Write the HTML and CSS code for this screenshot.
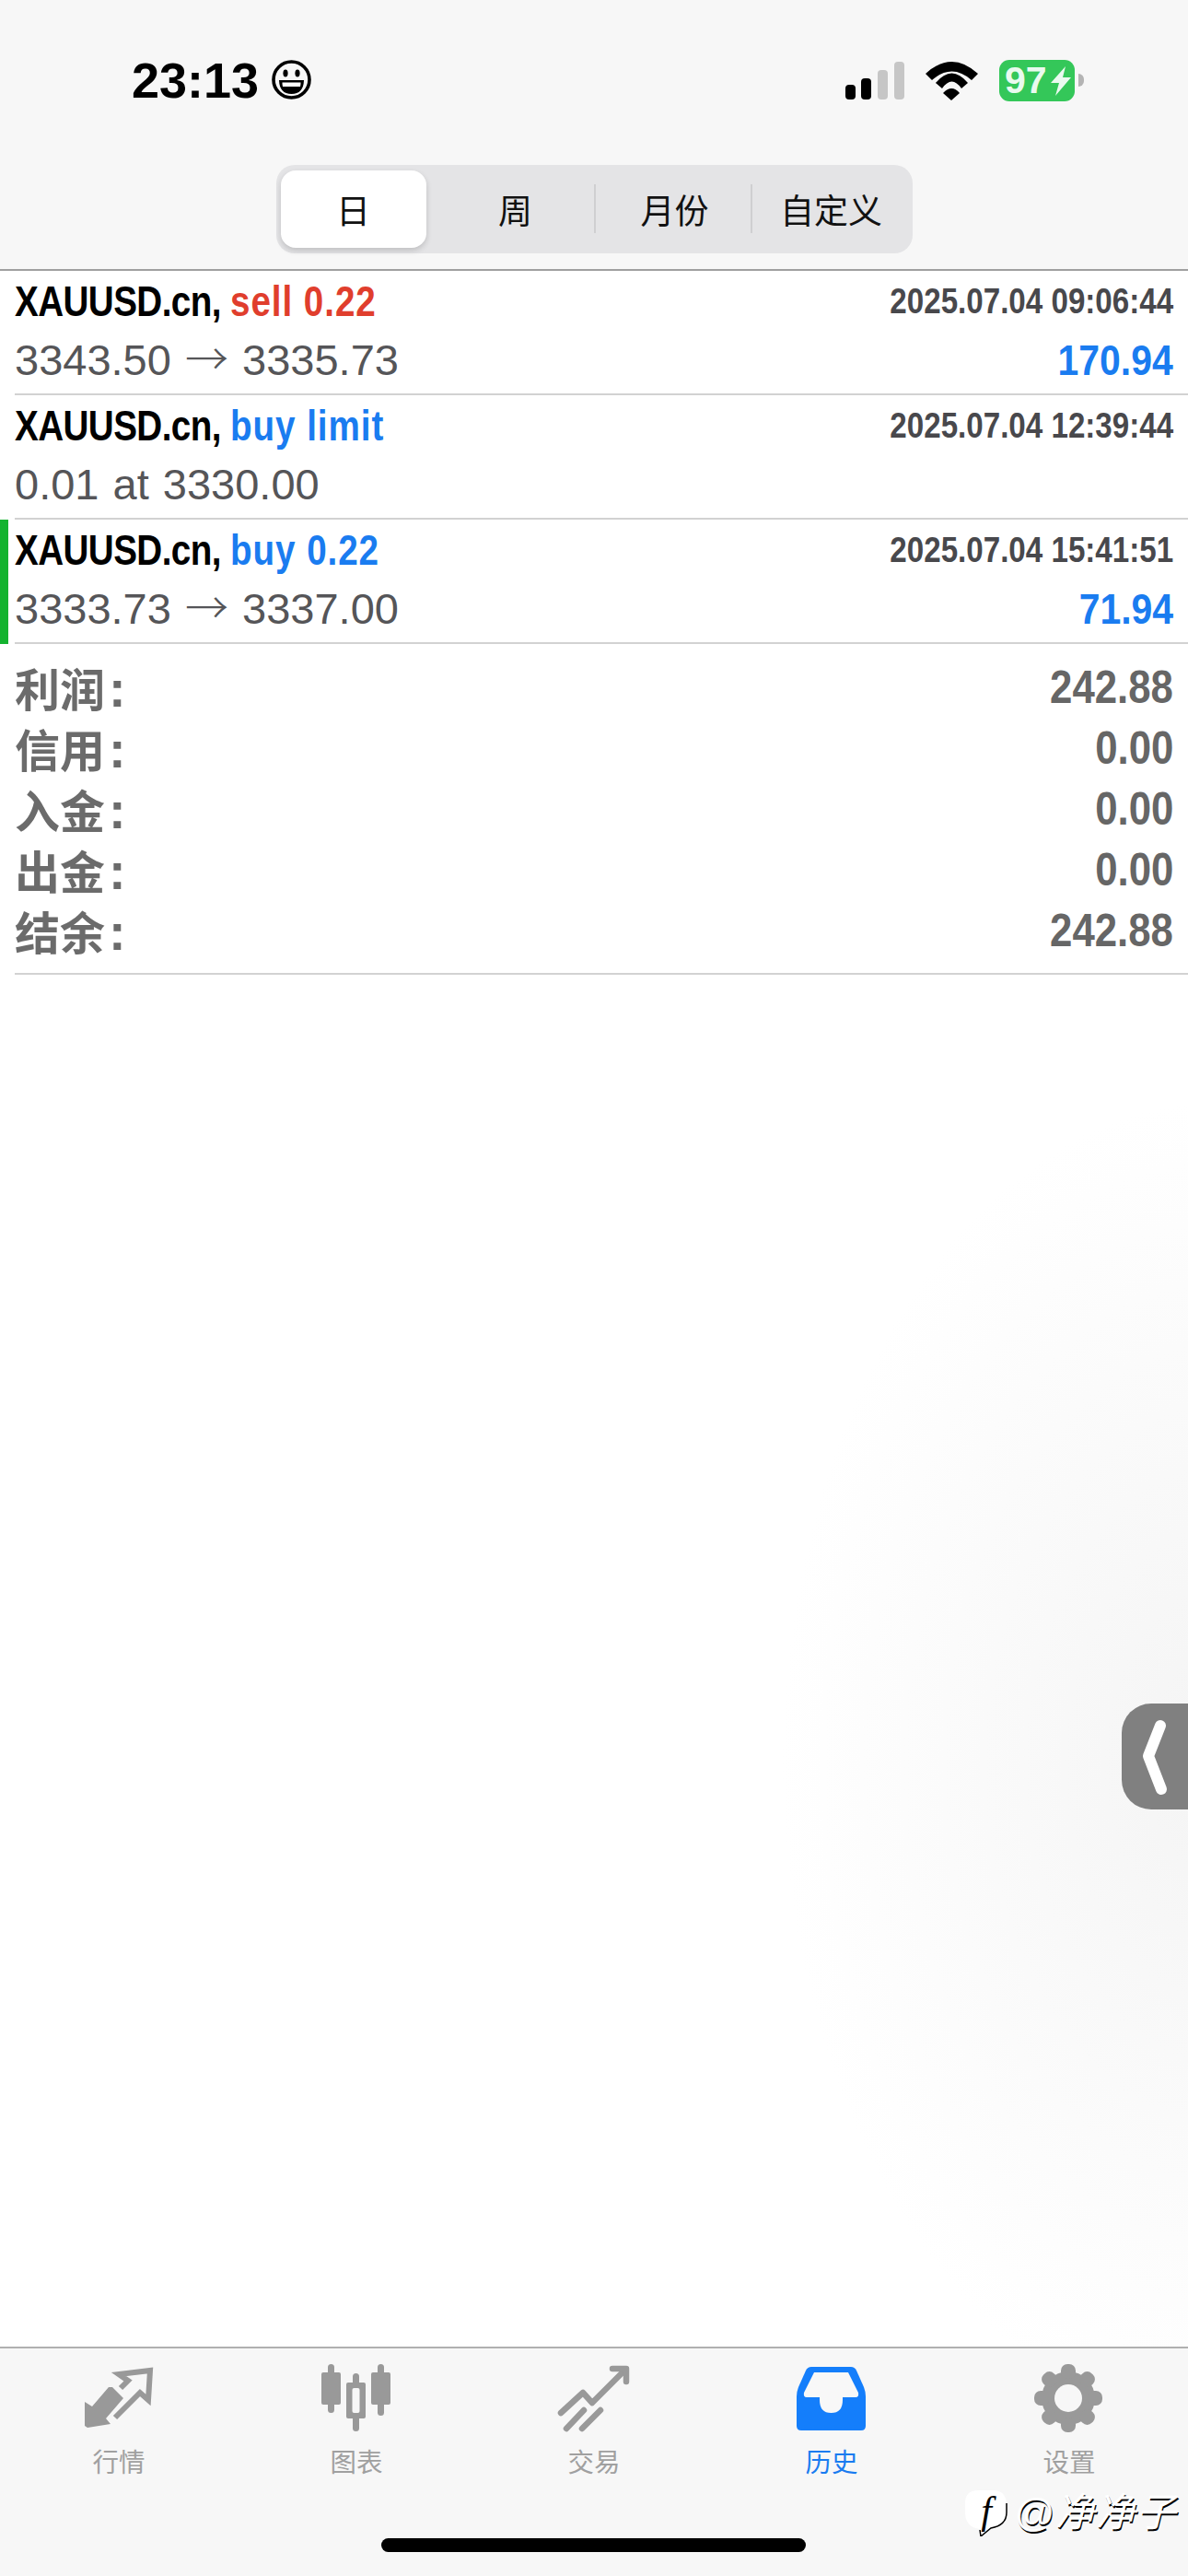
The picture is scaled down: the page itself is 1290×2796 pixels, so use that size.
FILE: index.html
```html
<!DOCTYPE html>
<html>
    <head>
        <meta charset="utf-8">
        <title>History</title>
        <link rel="stylesheet" href="styles.css">
    </head>
    <body>
        <div class="page">
            <header class="header">
                <div class="status">
                    <div class="clock">
                        <span class="time">23:13</span>
                        <svg class="smiley" width="43" height="43" viewBox="0 0 43 43">
                            <circle cx="21.5" cy="21.5" r="19.5" fill="none" stroke="#000" stroke-width="3.6"/>
                            <ellipse cx="15" cy="14.5" rx="2.6" ry="4" fill="#000"/>
                            <ellipse cx="28" cy="14.5" rx="2.6" ry="4" fill="#000"/>
                            <path d="M8 22H35Q34.500 37 21.500 37Q8.500 37 8 22Z" fill="#000"/>
                            <path d="M11.500 24.500H31.500Q31.500 27 31 29H12Q11.500 27 11.500 24.500Z" fill="#fff"/>
                        </svg>
                    </div>
                    <div class="indicators">
                        <svg width="64" height="41" viewBox="0 0 64 41">
                            <rect x="0" y="25" width="11" height="16" rx="4" fill="#000"/>
                            <rect x="17" y="18" width="11" height="23" rx="4" fill="#000"/>
                            <rect x="35" y="9" width="11" height="32" rx="4" fill="#c6c6c6"/>
                            <rect x="53" y="0" width="11" height="41" rx="4" fill="#c6c6c6"/>
                        </svg>
                        <svg width="57" height="42" viewBox="0 0 57 42">
                            <path d="M0 13Q28.500 -13 57 13L50 20Q28.500 1 7 20Z" fill="#000"/>
                            <path d="M11 23Q28.500 2 46 23L39 29Q28.500 14 18 29Z" fill="#000"/>
                            <path d="M19 34Q28.500 24 37 34L28 42Z" fill="#000"/>
                        </svg>
                        <div class="battery">
                            <span class="battery-text">97</span>
                            <svg width="24" height="34" viewBox="0 0 24 34">
                                <polygon points="17,1 1,19 10,19 6,33 23,13 14,13" fill="#eafaef"/>
                            </svg>
                        </div>
                    </div>
                </div>
                <div class="segments">
                    <div class="segment segment-on">日</div>
                    <div class="segment">周</div>
                    <div class="segment segment-line">月份</div>
                    <div class="segment segment-line">自定义</div>
                </div>
            </header>

            <main class="main">
                <div class="row">
                    <div class="mark"></div>
                    <div class="row-body">
                        <div class="title"><span class="squeeze squeeze-left"><span class="name">XAUUSD.cn, </span><span class="side red">sell 0.22</span></span></div>
                        <div class="date"><span class="squeeze squeeze-right">2025.07.04 09:06:44</span></div>
                        <div class="price">3343.50 <span class="arrow">→</span> 3335.73</div>
                        <div class="profit"><span class="squeeze squeeze-right">170.94</span></div>
                    </div>
                </div>
                <div class="row">
                    <div class="mark"></div>
                    <div class="row-body">
                        <div class="title"><span class="squeeze squeeze-left"><span class="name">XAUUSD.cn, </span><span class="side blue">buy limit</span></span></div>
                        <div class="date"><span class="squeeze squeeze-right">2025.07.04 12:39:44</span></div>
                        <div class="price">0.01 at 3330.00</div>
                        <div class="profit"></div>
                    </div>
                </div>
                <div class="row">
                    <div class="mark mark-on"></div>
                    <div class="row-body">
                        <div class="title"><span class="squeeze squeeze-left"><span class="name">XAUUSD.cn, </span><span class="side blue">buy 0.22</span></span></div>
                        <div class="date"><span class="squeeze squeeze-right">2025.07.04 15:41:51</span></div>
                        <div class="price">3333.73 <span class="arrow">→</span> 3337.00</div>
                        <div class="profit"><span class="squeeze squeeze-right">71.94</span></div>
                    </div>
                </div>

                <div class="summary">
                    <div class="sum-row"><span class="sum-label">利润<b>:</b></span><span class="sum-value">242.88</span></div>
                    <div class="sum-row"><span class="sum-label">信用<b>:</b></span><span class="sum-value">0.00</span></div>
                    <div class="sum-row"><span class="sum-label">入金<b>:</b></span><span class="sum-value">0.00</span></div>
                    <div class="sum-row"><span class="sum-label">出金<b>:</b></span><span class="sum-value">0.00</span></div>
                    <div class="sum-row"><span class="sum-label">结余<b>:</b></span><span class="sum-value">242.88</span></div>
                </div>

                <div class="handle">
                    <svg width="72" height="115" viewBox="0 0 72 115">
                        <path d="M42 24L29 57L43 93" fill="none" stroke="#fff" stroke-width="12" stroke-linecap="round" stroke-linejoin="round"/>
                    </svg>
                </div>
            </main>

            <footer class="tabbar">
                <nav class="tabs">
                    <div class="tab">
                        <svg width="80" height="76" viewBox="0 0 80 76">
                            <path d="M3 42L11 47L29 26H33L45 38L26 60L31 66L6 70L3 68Z" fill="#999"/>
                            <path d="M42 27L50 19L40 12L74 8L72 40L63 32L36 59" fill="none" stroke="#999" stroke-width="6"/>
                        </svg>
                        <span class="tab-label">行情</span>
                    </div>
                    <div class="tab">
                        <svg width="80" height="76" viewBox="0 0 80 76">
                            <rect x="9" y="1" width="7" height="53" rx="3.500" fill="#999"/>
                            <rect x="2" y="10" width="21" height="35" rx="2" fill="#999"/>
                            <rect x="36" y="11" width="7" height="63" rx="3.500" fill="#999"/>
                            <rect x="29" y="21" width="21" height="39" rx="2" fill="#999"/>
                            <rect x="35.500" y="27" width="8" height="27" rx="2" fill="#f7f7f7"/>
                            <rect x="63" y="1" width="7" height="56" rx="3.500" fill="#999"/>
                            <rect x="56" y="10" width="21" height="35" rx="2" fill="#999"/>
                        </svg>
                        <span class="tab-label">图表</span>
                    </div>
                    <div class="tab">
                        <svg width="80" height="76" viewBox="0 0 80 76">
                            <path d="M4 54L28 32L38 43L74 7" fill="none" stroke="#999" stroke-width="6.500" stroke-linecap="round" stroke-linejoin="round"/>
                            <path d="M60 6H75V20" fill="none" stroke="#999" stroke-width="6.500" stroke-linecap="round" stroke-linejoin="round"/>
                            <path d="M10 71L29 51M27 71L47 51" fill="none" stroke="#999" stroke-width="6.500" stroke-linecap="round"/>
                        </svg>
                        <span class="tab-label">交易</span>
                    </div>
                    <div class="tab tab-on">
                        <svg width="80" height="76" viewBox="0 0 80 76">
                            <path d="M18 4H61Q65 4 67 8L75 26Q77 31 77 36V68Q77 73 72 73H7Q2 73 2 68V36Q2 31 4 26L12 8Q14 4 18 4Z" fill="#147efb"/>
                            <path d="M21 10H58L69 32Q70 37 66 37H52V40Q52 54 39.500 54Q27 54 27 40V37H13Q9 37 10 32Z" fill="#f8f8f8"/>
                        </svg>
                        <span class="tab-label">历史</span>
                    </div>
                    <div class="tab">
                        <svg width="80" height="76" viewBox="0 0 80 76">
                            <g transform="translate(39 38)" fill="#999">
                                <circle r="29"/>
                                <rect x="-8" y="-37" width="16" height="16" rx="7"/>
                                <rect x="-8" y="-37" width="16" height="16" rx="7" transform="rotate(45)"/>
                                <rect x="-8" y="-37" width="16" height="16" rx="7" transform="rotate(90)"/>
                                <rect x="-8" y="-37" width="16" height="16" rx="7" transform="rotate(135)"/>
                                <rect x="-8" y="-37" width="16" height="16" rx="7" transform="rotate(180)"/>
                                <rect x="-8" y="-37" width="16" height="16" rx="7" transform="rotate(225)"/>
                                <rect x="-8" y="-37" width="16" height="16" rx="7" transform="rotate(270)"/>
                                <rect x="-8" y="-37" width="16" height="16" rx="7" transform="rotate(315)"/>
                                <circle r="15" fill="#f7f7f7"/>
                            </g>
                        </svg>
                        <span class="tab-label">设置</span>
                    </div>
                </nav>
                <div class="home-bar"></div>
                <div class="watermark">
                    <div class="logo">
                        <svg class="logo-shape" width="46" height="50" viewBox="0 0 46 50">
                            <path d="M14 0H30Q45 0 45 16V24Q45 38 28 41L17 50L16 42Q0 40 0 24V14Q0 0 14 0Z" fill="#fff"/>
                            <path d="M45 14V24Q45 38 28 41L17 50L16 43" fill="none" stroke="#000" stroke-width="1.500"/>
                        </svg>
                        <span class="logo-letter">f</span>
                    </div>
                    <span class="watermark-text">@净净子</span>
                </div>
            </footer>
        </div>
    </body>
</html>
```

FILE: styles.css
```css
*{
    box-sizing: border-box;
    margin: 0;
}
body{
    font-family: "Liberation Sans", "Noto Sans CJK SC", sans-serif;
    background: #fff;
}
.page{
    width: 1290px;
    height: 2796px;
    display: flex;
    flex-direction: column;
    overflow: hidden;
}

/* status bar and period switch */
.header{
    height: 294px;
    padding-top: 60px;
    background: #f7f7f7;
    border-bottom: 2px solid #a0a0a0;
}
.status{
    height: 55px;
    padding: 0 113px 0 143px;
    display: flex;
    justify-content: space-between;
    align-items: center;
}
.clock{
    display: flex;
    align-items: center;
    gap: 14px;
}
.time{
    font-size: 54px;
    font-weight: bold;
    color: #000;
    line-height: 55px;
}
.smiley{
    margin-top: -2px;
}
.indicators{
    display: flex;
    align-items: center;
    gap: 23px;
}
.battery{
    width: 82px;
    height: 45px;
    margin-right: 10px;
    padding-left: 6px;
    display: flex;
    align-items: center;
    gap: 3px;
    position: relative;
    background: #34c759;
    border-radius: 11px;
}
.battery:after{
    content: "";
    position: absolute;
    left: 86px;
    top: 15px;
    width: 6px;
    height: 14px;
    background: #b4b4b4;
    border-radius: 0 7px 7px 0;
}
.battery-text{
    font-size: 41px;
    font-weight: bold;
    line-height: 45px;
    color: #eafaef;
}
.segments{
    width: 691px;
    height: 96px;
    margin: 64px auto 0;
    padding: 6px 6px 6px 5px;
    display: grid;
    grid-template-columns: repeat(4, 1fr);
    background: #e4e4e6;
    border-radius: 20px;
}
.segment{
    display: flex;
    align-items: center;
    justify-content: center;
    font-family: "Noto Sans CJK SC", sans-serif;
    font-size: 37px;
    color: #111;
    position: relative;
}
.segment-on{
    background: #fff;
    border-radius: 16px;
    box-shadow: 0 3px 6px rgba(0, 0, 0, 0.16);
    margin-right: 12px;
}
.segment-line{
    padding-left: 6px;
}
.segment-line:before{
    content: "";
    position: absolute;
    left: 0;
    top: 15px;
    height: 53px;
    border-left: 2px solid #cfcfd1;
}

/* trades */
.main{
    flex: 1;
    position: relative;
    background: radial-gradient(ellipse 480px 720px at 1330px 1620px, #f4f4f4, #fff);
}
.row{
    height: 135px;
    display: flex;
}
.mark{
    width: 9px;
    flex: none;
}
.mark-on{
    background: #14b32f;
}
.row-body{
    flex: 1;
    margin-left: 7px;
    padding-right: 16px;
    display: grid;
    grid-template-columns: 1fr auto;
    grid-template-rows: 64px 64px;
    padding-top: 1px;
    border-bottom: 2px solid #d2d2d2;
    white-space: nowrap;
}
.squeeze{
    display: inline-block;
}
.squeeze-left{
    transform-origin: left center;
}
.squeeze-right{
    transform-origin: right center;
}
.title{
    font-size: 46px;
    font-weight: bold;
    line-height: 64px;
    color: #000;
}
.title .squeeze{
    transform: scaleX(0.84);
}
.name{
    letter-spacing: -0.7px;
}
.side{
    letter-spacing: 1.1px;
}
.red{
    color: #e03e2d;
}
.blue{
    color: #1a7cf0;
}
.date{
    font-size: 39px;
    font-weight: bold;
    line-height: 64px;
    color: #48484c;
    text-align: right;
}
.date .squeeze{
    transform: scaleX(0.85);
}
.price{
    font-size: 47px;
    line-height: 64px;
    word-spacing: 2px;
    color: #555558;
}
.arrow{
    font-family: "Noto Sans CJK SC", sans-serif;
    font-weight: 300;
    line-height: 1;
}
.profit{
    font-size: 46px;
    font-weight: bold;
    line-height: 64px;
    color: #1a7cf0;
    text-align: right;
}
.profit .squeeze{
    transform: scaleX(0.89);
}

/* totals */
.summary{
    margin-left: 16px;
    padding: 14px 16px 13px 0;
    border-bottom: 2px solid #d2d2d2;
}
.sum-row{
    height: 66px;
    display: flex;
    justify-content: space-between;
    align-items: center;
    color: #666;
}
.sum-label{
    font-family: "Noto Sans CJK SC", sans-serif;
    font-size: 49px;
    font-weight: 700;
    line-height: 66px;
    color: #6b6b6b;
}
.sum-label b{
    font-family: "Liberation Sans", sans-serif;
    font-size: 56px;
    line-height: 0;
    margin-left: 4px;
}
.sum-value{
    font-size: 50px;
    font-weight: bold;
    transform: scaleX(0.875);
    transform-origin: right center;
}

.handle{
    position: absolute;
    right: 0;
    top: 1555px;
    width: 72px;
    height: 115px;
    background: #808080;
    border-radius: 32px 0 0 32px;
}

/* bottom navigation */
.tabbar{
    height: 249px;
    position: relative;
    background: #f7f7f7;
    border-top: 2px solid #b0b0b0;
}
.tabs{
    display: grid;
    grid-template-columns: repeat(5, 258px);
    padding-top: 16px;
}
.tab{
    display: flex;
    flex-direction: column;
    align-items: center;
    color: #a0a0a0;
}
.tab svg{
    display: block;
}
.tab-label{
    margin-top: 13px;
    font-family: "Noto Sans CJK SC", sans-serif;
    font-size: 28.5px;
    line-height: 34px;
}
.tab-on{
    color: #1a7cf0;
}
.home-bar{
    width: 461px;
    height: 15px;
    margin: 67px 0 0 414px;
    background: #000;
    border-radius: 8px;
}
.watermark{
    position: absolute;
    left: 1048px;
    top: 154px;
    display: flex;
    align-items: flex-start;
    gap: 7px;
}
.logo{
    width: 46px;
    height: 50px;
    position: relative;
    text-align: center;
}
.logo-shape{
    position: absolute;
    left: 0;
    top: 0;
}
.logo-letter{
    position: relative;
    font-family: "Liberation Serif", serif;
    font-style: italic;
    font-size: 42px;
    line-height: 44px;
    color: #000;
}
.watermark-text{
    font-family: "Liberation Sans", "Noto Sans CJK SC", sans-serif;
    font-size: 43px;
    font-style: italic;
    line-height: 48px;
    letter-spacing: 1px;
    color: #fff;
    text-shadow: 1px 2px 0 #000;
    white-space: nowrap;
}
```
